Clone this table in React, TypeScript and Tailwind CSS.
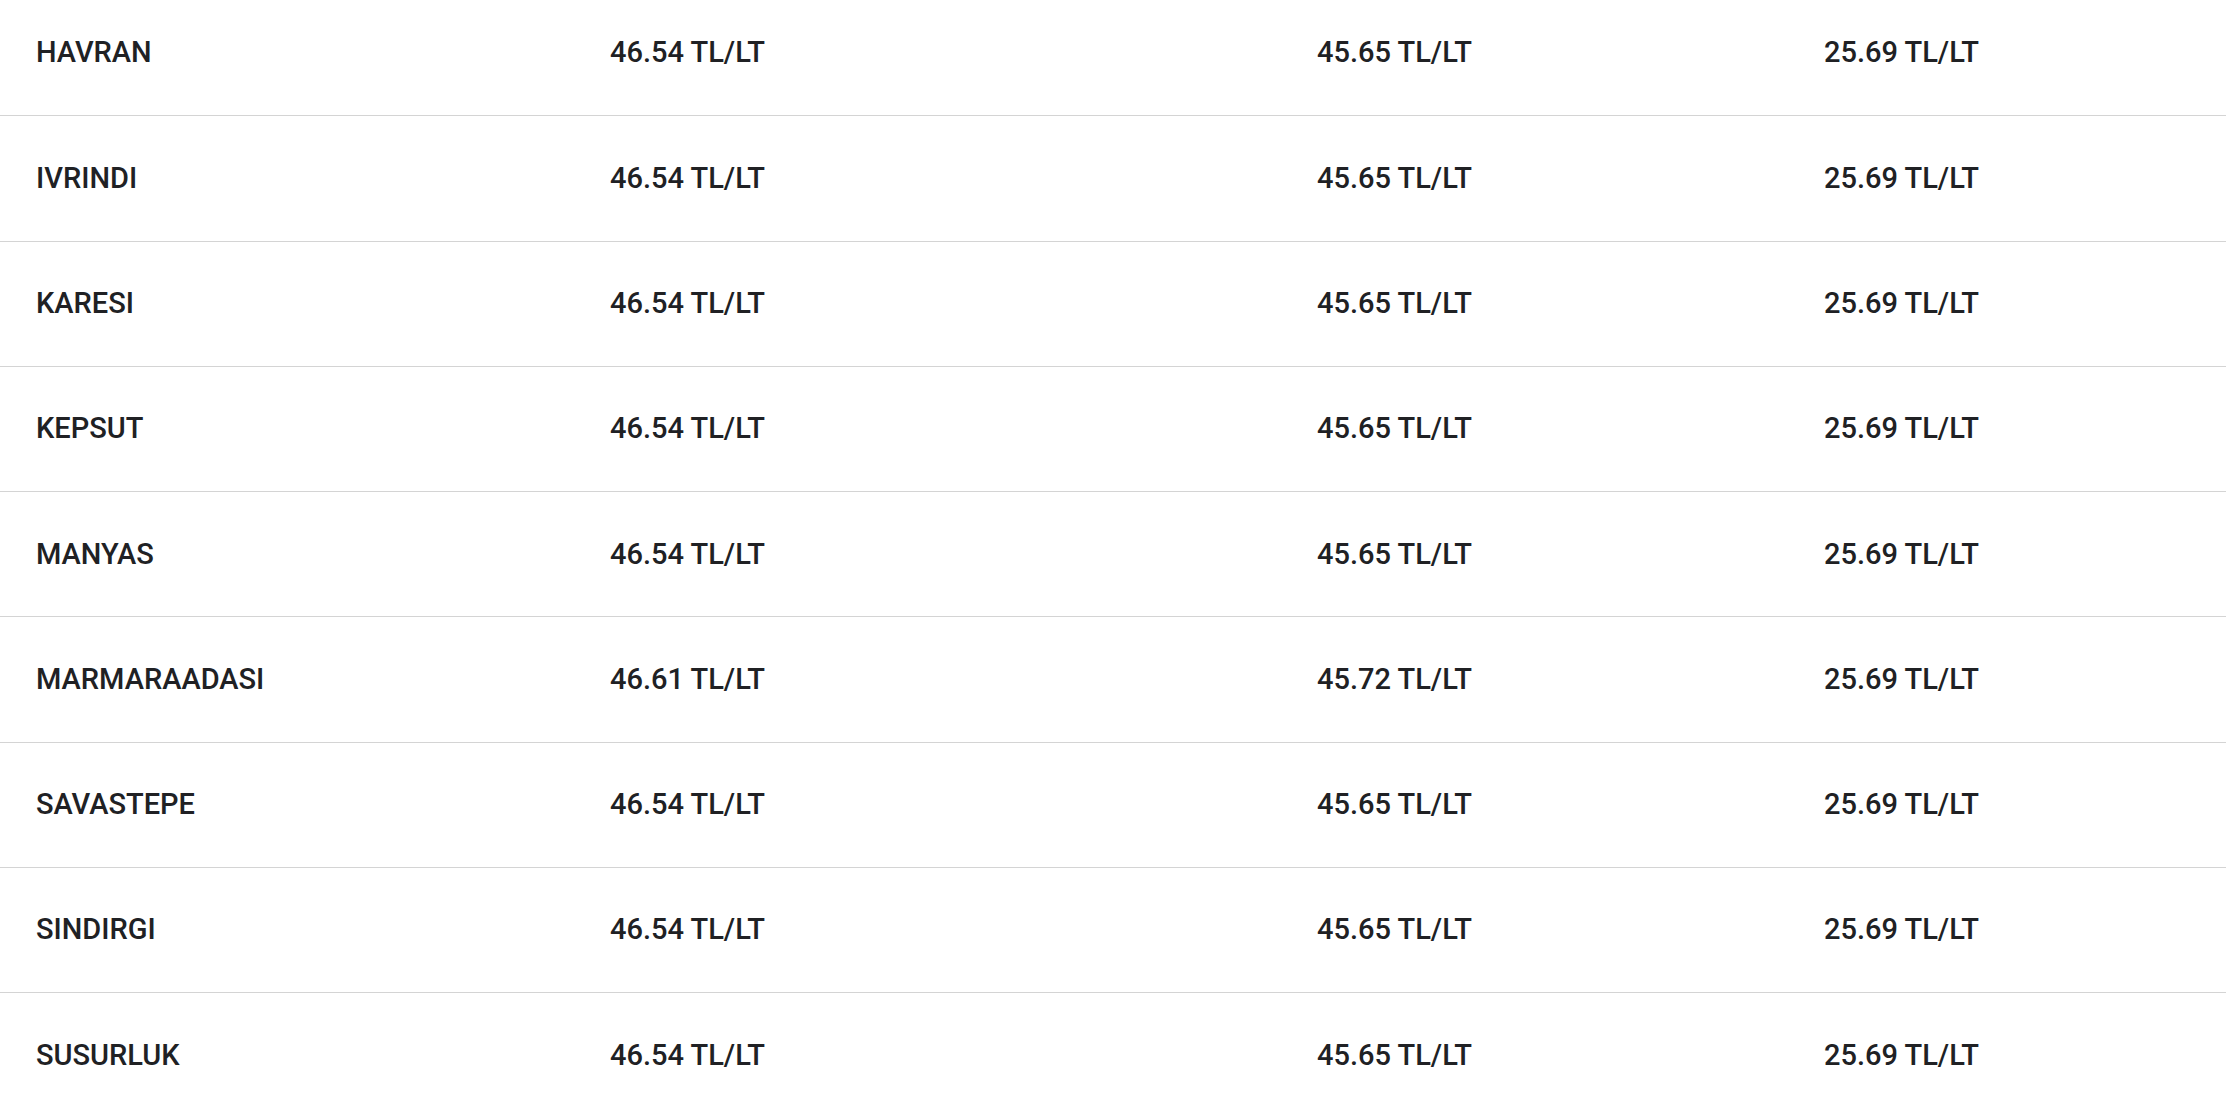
const rows = [
  { name: 'HAVRAN', benzin: '46.54', motorin: '45.65', lpg: '25.69' },
  { name: 'IVRINDI', benzin: '46.54', motorin: '45.65', lpg: '25.69' },
  { name: 'KARESI', benzin: '46.54', motorin: '45.65', lpg: '25.69' },
  { name: 'KEPSUT', benzin: '46.54', motorin: '45.65', lpg: '25.69' },
  { name: 'MANYAS', benzin: '46.54', motorin: '45.65', lpg: '25.69' },
  { name: 'MARMARAADASI', benzin: '46.61', motorin: '45.72', lpg: '25.69' },
  { name: 'SAVASTEPE', benzin: '46.54', motorin: '45.65', lpg: '25.69' },
  { name: 'SINDIRGI', benzin: '46.54', motorin: '45.65', lpg: '25.69' },
  { name: 'SUSURLUK', benzin: '46.54', motorin: '45.65', lpg: '25.69' }
];

const App = () => {
  return (
    <div className="w-full h-[1104px] overflow-hidden bg-white font-['Roboto',sans-serif] text-[#202124]">
      <div className="-mt-[9px]">
        {rows.map((row, index) => (
          <div
            key={row.name}
            className={`grid grid-cols-[574px_707px_507px_1fr] items-center h-[125.3px] text-[29px] font-medium ${
              index < rows.length - 1 ? 'border-b border-[#d4d4d4]' : ''
            }`}
          >
            <div className="pl-[36px]">{row.name}</div>
            <div className="pl-[36px]">{row.benzin} TL/LT</div>
            <div className="pl-[36px]">{row.motorin} TL/LT</div>
            <div className="pl-[36px]">{row.lpg} TL/LT</div>
          </div>
        ))}
      </div>
    </div>
  );
};

export default App;
